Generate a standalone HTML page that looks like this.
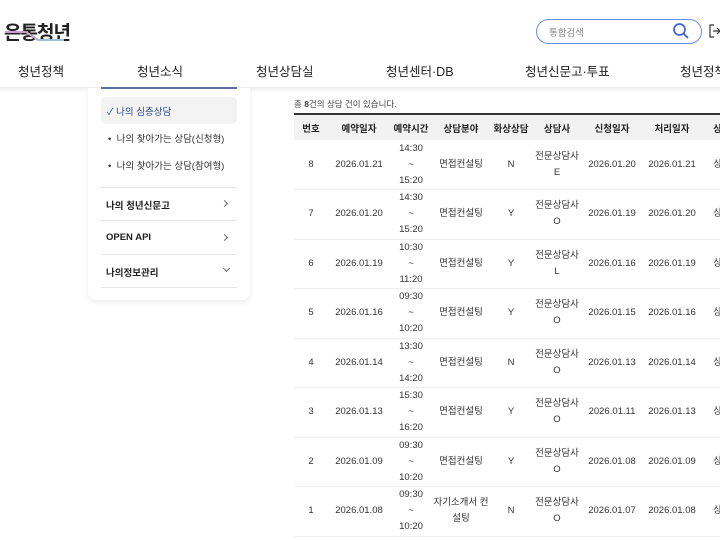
<!DOCTYPE html>
<html><head><meta charset="utf-8"><style>
*{margin:0;padding:0;box-sizing:border-box}
body{width:720px;height:540px;overflow:hidden;background:#fff;font-family:"Liberation Sans","Noto Sans CJK KR",sans-serif;color:#222;position:relative}
.a{position:absolute;white-space:nowrap}
.nav{font-size:12.5px;color:#222;top:61px}
.hdrsh{position:absolute;left:0;top:87px;width:720px;height:6px;background:linear-gradient(#eee,#fff)}
.side{position:absolute;left:88px;top:88px;width:162px;height:212px;background:#fff;border-radius:0 0 8px 8px;box-shadow:0 2px 6px rgba(0,0,0,.08)}
table{position:absolute;left:294px;top:113px;border-collapse:collapse;table-layout:fixed;width:448px;font-size:9.5px;border-top:2px solid #333}
th{background:#f2f2f2;height:26px;font-weight:bold;color:#222}
td{height:49.5px;text-align:center;border-bottom:1px solid #eee;line-height:16px;color:#333}
.chev{position:absolute;width:5px;height:5px;border-right:1.2px solid #666;border-bottom:1.2px solid #666}
</style></head><body>
<div class="a" style="left:4px;top:18px;font-size:19px;font-weight:bold;color:#222;letter-spacing:-1px">온통청년</div>
<svg class="a" style="left:4px;top:28px" width="62" height="16"><path d="M1 4 H22 L34 12 H60" stroke="#c8a3c6" stroke-width="2" fill="none"/><path d="M34 12 H60" stroke="#9cc0d8" stroke-width="2"/></svg>
<div class="a" style="left:536px;top:19px;width:166px;height:25px;border:1.5px solid #6b8ef0;border-radius:13px"></div>
<div class="a" style="left:549px;top:25px;font-size:9.5px;color:#888">통합검색</div>
<svg class="a" style="left:672px;top:22px" width="18" height="18"><circle cx="7.5" cy="7.5" r="5.5" stroke="#3d64d8" stroke-width="1.7" fill="none"/><path d="M11.5 11.5 L16 16" stroke="#3d64d8" stroke-width="1.8"/></svg>
<svg class="a" style="left:709px;top:24px" width="11" height="14"><path d="M5 1H1V13H5M4 7H11M8 4L11 7L8 10" stroke="#333" stroke-width="1.2" fill="none"/></svg>
<div class="a nav" style="left:18px">청년정책</div>
<div class="a nav" style="left:137px">청년소식</div>
<div class="a nav" style="left:256px">청년상담실</div>
<div class="a nav" style="left:386px">청년센터·DB</div>
<div class="a nav" style="left:525px">청년신문고·투표</div>
<div class="a nav" style="left:680px">청년정책</div>
<div class="hdrsh"></div>
<div class="side"></div>
<div class="a" style="left:101px;top:87px;width:136px;height:2px;background:#5a6fa0"></div>
<div class="a" style="left:101px;top:97px;width:136px;height:27px;background:#f3f3f3;border-radius:5px"></div>
<div class="a" style="left:107px;top:104px;font-size:9.5px;color:#2b4a8f">✓ 나의 심층상담</div>
<div class="a" style="left:108px;top:131px;font-size:9.5px;color:#333">• &nbsp;나의 찾아가는 상담(신청형)</div>
<div class="a" style="left:108px;top:158px;font-size:9.5px;color:#333">• &nbsp;나의 찾아가는 상담(참여형)</div>
<div class="a" style="left:101px;top:187px;width:136px;height:1px;background:#e6e6e6"></div>
<div class="a" style="left:106px;top:198px;font-size:9.5px;font-weight:bold">나의 청년신문고</div>
<div class="chev" style="left:222px;top:201px;transform:rotate(-45deg)"></div>
<div class="a" style="left:101px;top:220px;width:136px;height:1px;background:#e6e6e6"></div>
<div class="a" style="left:106px;top:232px;font-size:9.5px;font-weight:bold">OPEN API</div>
<div class="chev" style="left:222px;top:235px;transform:rotate(-45deg)"></div>
<div class="a" style="left:101px;top:254px;width:136px;height:1px;background:#e6e6e6"></div>
<div class="a" style="left:106px;top:265px;font-size:9.5px;font-weight:bold">나의정보관리</div>
<div class="chev" style="left:224px;top:266px;transform:rotate(45deg)"></div>
<div class="a" style="left:101px;top:287px;width:136px;height:1px;background:#e6e6e6"></div>
<div class="a" style="left:294px;top:98px;font-size:8.5px;color:#444">총 <b>8</b>건의 상담 건이 있습니다.</div>
<table>
<colgroup><col style="width:34px"><col style="width:62px"><col style="width:42px"><col style="width:58px"><col style="width:42px"><col style="width:50px"><col style="width:60px"><col style="width:60px"><col style="width:40px"></colgroup>
<tr><th>번호</th><th>예약일자</th><th>예약시간</th><th>상담분야</th><th>화상상담</th><th>상담사</th><th>신청일자</th><th>처리일자</th><th>상태</th></tr>
<tr><td>8</td><td>2026.01.21</td><td>14:30<br>~<br>15:20</td><td>면접컨설팅</td><td>N</td><td>전문상담사<br>E</td><td>2026.01.20</td><td>2026.01.21</td><td>상담</td></tr>
<tr><td>7</td><td>2026.01.20</td><td>14:30<br>~<br>15:20</td><td>면접컨설팅</td><td>Y</td><td>전문상담사<br>O</td><td>2026.01.19</td><td>2026.01.20</td><td>상담</td></tr>
<tr><td>6</td><td>2026.01.19</td><td>10:30<br>~<br>11:20</td><td>면접컨설팅</td><td>Y</td><td>전문상담사<br>L</td><td>2026.01.16</td><td>2026.01.19</td><td>상담</td></tr>
<tr><td>5</td><td>2026.01.16</td><td>09:30<br>~<br>10:20</td><td>면접컨설팅</td><td>Y</td><td>전문상담사<br>O</td><td>2026.01.15</td><td>2026.01.16</td><td>상담</td></tr>
<tr><td>4</td><td>2026.01.14</td><td>13:30<br>~<br>14:20</td><td>면접컨설팅</td><td>N</td><td>전문상담사<br>O</td><td>2026.01.13</td><td>2026.01.14</td><td>상담</td></tr>
<tr><td>3</td><td>2026.01.13</td><td>15:30<br>~<br>16:20</td><td>면접컨설팅</td><td>Y</td><td>전문상담사<br>O</td><td>2026.01.11</td><td>2026.01.13</td><td>상담</td></tr>
<tr><td>2</td><td>2026.01.09</td><td>09:30<br>~<br>10:20</td><td>면접컨설팅</td><td>Y</td><td>전문상담사<br>O</td><td>2026.01.08</td><td>2026.01.09</td><td>상담</td></tr>
<tr><td>1</td><td>2026.01.08</td><td>09:30<br>~<br>10:20</td><td>자기소개서 컨<br>설팅</td><td>N</td><td>전문상담사<br>O</td><td>2026.01.07</td><td>2026.01.08</td><td>상담</td></tr>
</table>
</body></html>
